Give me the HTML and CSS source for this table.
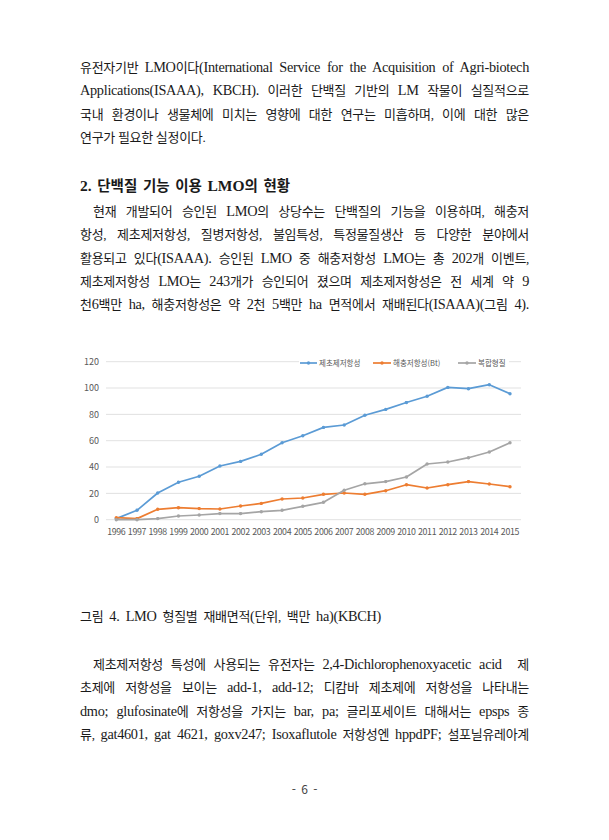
FILE: index.html
```html
<!DOCTYPE html>
<html lang="ko">
<head>
<meta charset="utf-8">
<title>LMO 현황</title>
<link rel="stylesheet" href="styles.css">
</head>
<body>
<main class="page">
  <p class="para">
    <span class="ln">유전자기반 <span class="en">LMO</span>이다<span class="en">(International Service for the Acquisition of Agri-biotech</span></span>
    <span class="ln"><span class="en">Applications(ISAAA), KBCH).</span> 이러한 단백질 기반의 <span class="en">LM</span> 작물이 실질적으로</span>
    <span class="ln">국내 환경이나 생물체에 미치는 영향에 대한 연구는 미흡하며, 이에 대한 많은</span>
    <span class="ln last">연구가 필요한 실정이다.</span>
  </p>

  <h2 class="heading"><span class="en">2.</span> 단백질 기능 이용 <span class="en">LMO</span>의 현황</h2>

  <p class="para p2">
    <span class="ln indent">현재 개발되어 승인된 <span class="en">LMO</span>의 상당수는 단백질의 기능을 이용하며, 해충저</span>
    <span class="ln">항성, 제초제저항성, 질병저항성, 불임특성, 특정물질생산 등 다양한 분야에서</span>
    <span class="ln">활용되고 있다<span class="en">(ISAAA).</span> 승인된 <span class="en">LMO</span> 중 해충저항성 <span class="en">LMO</span>는 총 <span class="en">202</span>개 이벤트,</span>
    <span class="ln">제초제저항성 <span class="en">LMO</span>는 <span class="en">243</span>개가 승인되어 졌으며 제초제저항성은 전 세계 약 <span class="en">9</span></span>
    <span class="ln">천<span class="en">6</span>백만 <span class="en">ha,</span> 해충저항성은 약 <span class="en">2</span>천 <span class="en">5</span>백만 <span class="en">ha</span> 면적에서 재배된다<span class="en">(ISAAA)(</span>그림 <span class="en">4).</span></span>
  </p>

  <figure class="figure">
    <svg class="chart" width="449" height="200" viewBox="0 0 449 200">
      <defs>
        <marker id="mb" viewBox="0 0 4 4" refX="2" refY="2" markerWidth="4" markerHeight="4" markerUnits="userSpaceOnUse"><circle class="dot-b" cx="2" cy="2" r="1.7"/></marker>
        <marker id="mo" viewBox="0 0 4 4" refX="2" refY="2" markerWidth="4" markerHeight="4" markerUnits="userSpaceOnUse"><circle class="dot-o" cx="2" cy="2" r="1.7"/></marker>
        <marker id="mg" viewBox="0 0 4 4" refX="2" refY="2" markerWidth="4" markerHeight="4" markerUnits="userSpaceOnUse"><circle class="dot-g" cx="2" cy="2" r="1.7"/></marker>
      </defs>
      <g class="grid">
        <line x1="26" y1="173.7" x2="441" y2="173.7"/>
        <line x1="26" y1="147.4" x2="441" y2="147.4"/>
        <line x1="26" y1="121.0" x2="441" y2="121.0"/>
        <line x1="26" y1="94.7" x2="441" y2="94.7"/>
        <line x1="26" y1="68.4" x2="441" y2="68.4"/>
        <line x1="26" y1="42.0" x2="441" y2="42.0"/>
        <line x1="26" y1="15.7" x2="441" y2="15.7"/>
      </g>
      <g class="ylab">
        <text x="19" y="176.9">0</text>
        <text x="19" y="150.6">20</text>
        <text x="19" y="124.2">40</text>
        <text x="19" y="97.9">60</text>
        <text x="19" y="71.6">80</text>
        <text x="19" y="45.2">100</text>
        <text x="19" y="18.9">120</text>
      </g>
      <g class="xlab">
        <text x="36.3" y="189">1996</text>
        <text x="57.0" y="189">1997</text>
        <text x="77.7" y="189">1998</text>
        <text x="98.5" y="189">1999</text>
        <text x="119.2" y="189">2000</text>
        <text x="139.9" y="189">2001</text>
        <text x="160.6" y="189">2002</text>
        <text x="181.3" y="189">2003</text>
        <text x="202.1" y="189">2004</text>
        <text x="222.8" y="189">2005</text>
        <text x="243.5" y="189">2006</text>
        <text x="264.2" y="189">2007</text>
        <text x="284.9" y="189">2008</text>
        <text x="305.7" y="189">2009</text>
        <text x="326.4" y="189">2010</text>
        <text x="347.1" y="189">2011</text>
        <text x="367.8" y="189">2012</text>
        <text x="388.5" y="189">2013</text>
        <text x="409.3" y="189">2014</text>
        <text x="430.0" y="189">2015</text>
      </g>
      <polyline class="s-blue" marker-start="url(#mb)" marker-mid="url(#mb)" marker-end="url(#mb)"
        points="36.3,172.6 57.0,164.3 77.7,147.0 98.5,136.3 119.2,130.2 139.9,120.0 160.6,115.4 181.3,108.3 202.1,96.7 222.8,89.7 243.5,81.4 264.2,79.0 284.9,69.3 305.7,63.4 326.4,56.5 347.1,50.3 367.8,41.4 388.5,42.7 409.3,38.7 430.0,47.7"/>
      <polyline class="s-orange" marker-start="url(#mo)" marker-mid="url(#mo)" marker-end="url(#mo)"
        points="36.3,171.7 57.0,172.6 77.7,163.3 98.5,161.7 119.2,162.6 139.9,163.0 160.6,160.0 181.3,157.4 202.1,153.0 222.8,152.0 243.5,148.3 264.2,147.0 284.9,148.3 305.7,144.7 326.4,138.7 347.1,142.0 367.8,138.7 388.5,135.6 409.3,138.0 430.0,140.7"/>
      <polyline class="s-gray" marker-start="url(#mg)" marker-mid="url(#mg)" marker-end="url(#mg)"
        points="36.3,173.7 57.0,173.7 77.7,172.6 98.5,170.0 119.2,169.0 139.9,167.6 160.6,167.6 181.3,165.7 202.1,164.3 222.8,160.3 243.5,156.3 264.2,144.3 284.9,137.8 305.7,135.6 326.4,131.0 347.1,118.0 367.8,116.0 388.5,111.7 409.3,106.0 430.0,96.7"/>
      <g class="legend">
        <rect class="legend-bg" x="219" y="10" width="210" height="14"/>
        <line class="s-blue" x1="220" y1="17" x2="237" y2="17"/>
        <circle class="dot-b" cx="228.5" cy="17" r="1.7"/>
        <text x="239" y="19.8">제초제저항성</text>
        <line class="s-orange" x1="293" y1="17" x2="311" y2="17"/>
        <circle class="dot-o" cx="302" cy="17" r="1.7"/>
        <text x="313" y="19.8">해충저항성(Bt)</text>
        <line class="s-gray" x1="378" y1="17" x2="396" y2="17"/>
        <circle class="dot-g" cx="387" cy="17" r="1.7"/>
        <text x="398" y="19.8">복합형질</text>
      </g>
    </svg>
    <figcaption class="caption">그림 <span class="en">4. LMO</span> 형질별 재배면적<span class="en">(</span>단위, 백만 <span class="en">ha)(KBCH)</span></figcaption>
  </figure>

  <p class="para p3">
    <span class="ln indent">제초제저항성 특성에 사용되는 유전자는 <span class="en">2,4-Dichlorophenoxyacetic acid</span> &nbsp;제</span>
    <span class="ln">초제에 저항성을 보이는 <span class="en">add-1, add-12;</span> 디캄바 제초제에 저항성을 나타내는</span>
    <span class="ln"><span class="en">dmo; glufosinate</span>에 저항성을 가지는 <span class="en">bar, pa;</span> 글리포세이트 대해서는 <span class="en">epsps</span> 종</span>
    <span class="ln">류, <span class="en">gat4601, gat 4621, goxv247; Isoxaflutole</span> 저항성엔 <span class="en">hppdPF;</span> 설포닐유레아계</span>
  </p>

  <footer class="pagenum">- 6 -</footer>
</main>
</body>
</html>
```

FILE: styles.css
```css
html, body {
  margin: 0;
  padding: 0;
  background: #ffffff;
}

.page {
  width: 609px;
  box-sizing: border-box;
  padding: 56px 80px 0 80px;
  color: #1a1a1a;
  font-family: "Liberation Serif", "Noto Sans CJK KR", serif;
  font-size: 13px;
  line-height: 23.3px;
  letter-spacing: -0.3px;
}

.en {
  font-family: "Liberation Serif", serif;
  font-size: 14.3px;
  letter-spacing: -0.3px;
}

.para {
  margin: 0;
}

.ln {
  display: block;
  text-align: justify;
  text-align-last: justify;
}

.ln.last {
  text-align-last: left;
}

.ln.indent {
  padding-left: 13px;
}

.heading {
  margin: 25px 0 0 0;
  font-size: 14.5px;
  line-height: 23px;
  font-weight: 700;
  letter-spacing: 0;
  word-spacing: 2px;
}

.heading .en {
  font-size: 15.5px;
  letter-spacing: 0;
}

.p2 {
  margin-top: 2px;
}

.figure {
  margin: 29px 0 0 0;
}

.chart {
  display: block;
  overflow: visible;
}

.grid line {
  stroke: #d9d9d9;
  stroke-width: 0.8;
}

.ylab text {
  font-family: "Noto Sans CJK KR", "Liberation Sans", sans-serif;
  font-size: 9px;
  fill: #595959;
  text-anchor: end;
  letter-spacing: 0;
}

.xlab text {
  font-family: "Noto Sans CJK KR", "Liberation Sans", sans-serif;
  font-size: 8.8px;
  fill: #595959;
  text-anchor: middle;
  letter-spacing: -0.3px;
}

.s-blue, .s-orange, .s-gray {
  fill: none;
  stroke-width: 1.7;
  stroke-linejoin: round;
}

.s-blue { stroke: #5b9bd5; }
.s-orange { stroke: #ed7d31; }
.s-gray { stroke: #a5a5a5; }

.dot-b { fill: #5b9bd5; }
.dot-o { fill: #ed7d31; }
.dot-g { fill: #a5a5a5; }

.legend-bg {
  fill: #ffffff;
}

.legend text {
  font-family: "Noto Sans CJK KR", "Liberation Sans", sans-serif;
  font-size: 7.5px;
  fill: #595959;
  letter-spacing: 0;
}

.caption {
  margin-top: 59.5px;
  word-spacing: 3px;
}

.p3 {
  margin-top: 24.7px;
}

.pagenum {
  margin-top: 31px;
  text-align: center;
  font-family: "Noto Sans CJK KR", "DejaVu Sans", sans-serif;
  font-size: 12px;
  line-height: 23px;
  letter-spacing: 0;
  word-spacing: 2px;
  color: #444444;
}
```
